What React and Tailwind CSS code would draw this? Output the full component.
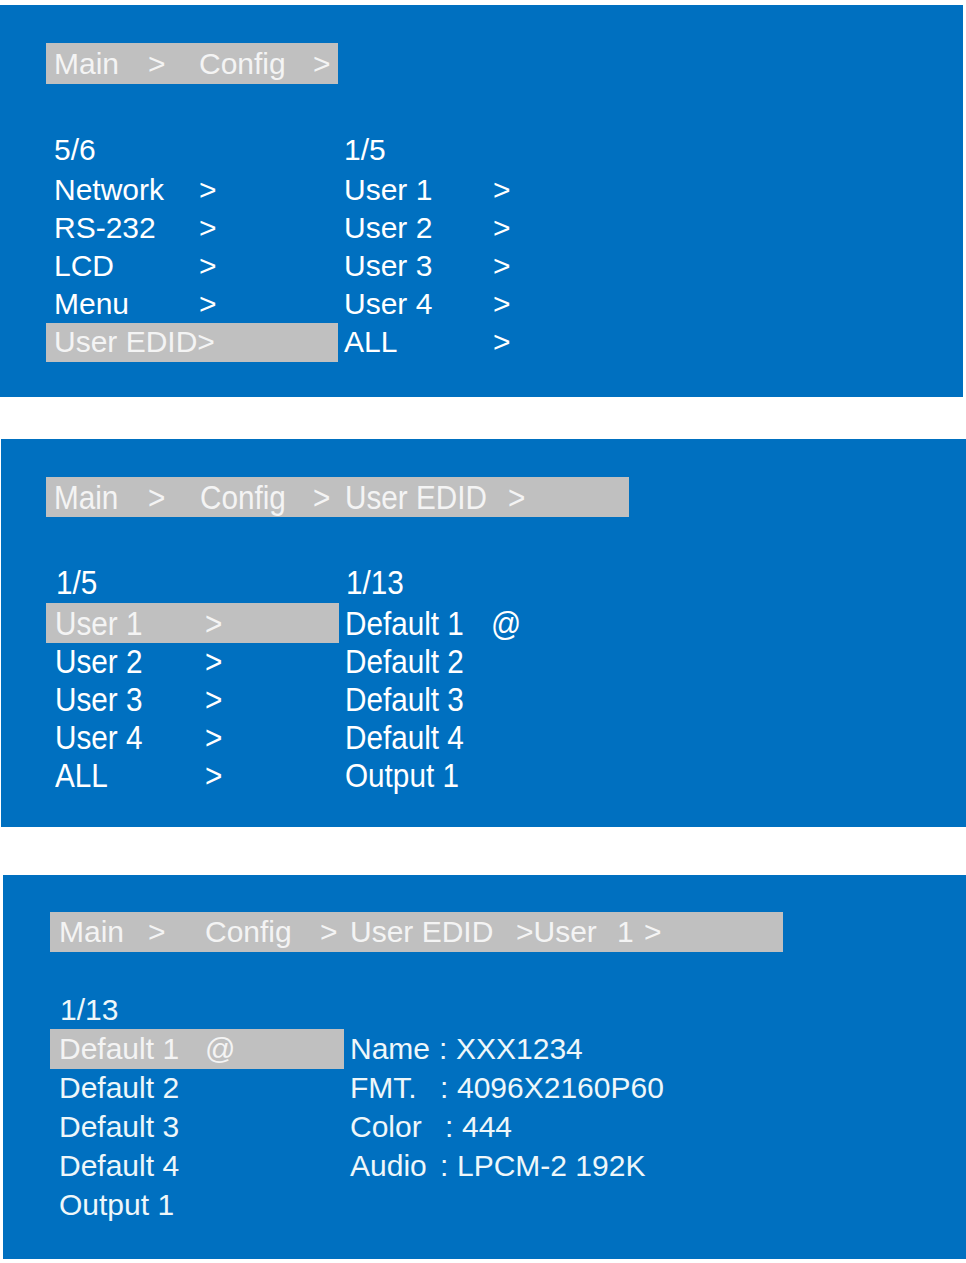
import React from "react";

const BLUE = "bg-[#0070C0]";
const GRAY = "bg-[#C0C0C0]";

function T({ narrow, children }) {
  // panel 2 text is drawn taller/narrower than plain Arial
  if (!narrow) return <span>{children}</span>;
  return <span className="inline-block origin-left scale-x-[0.9] whitespace-pre">{children}</span>;
}

function Crumbs({ items, narrow }) {
  return (
    <>
      {items.map(([label, w], i) => (
        <span key={i} className={`${w} shrink-0 whitespace-pre`}>
          <T narrow={narrow}>{label}</T>
        </span>
      ))}
    </>
  );
}

function PanelOne() {
  const left = ["Network", "RS-232", "LCD", "Menu", "User EDID"];
  const right = ["User 1", "User 2", "User 3", "User 4", "ALL"];
  return (
    <section className={`mt-[5px] w-[963px] h-[392px] ${BLUE} pt-[38px] text-[30px] leading-none text-white`}>
      <div className={`ml-[46px] w-[292px] h-[41px] ${GRAY} flex items-center pl-[8px] text-[#F4F4F4]`}>
        <Crumbs
          items={[
            ["Main", "w-[94px]"],
            [">", "w-[51px]"],
            ["Config", "w-[114px]"],
            [">", ""],
          ]}
        />
      </div>
      <div className="mt-[47px] mb-[2px] flex h-[38px] items-center">
        <div className="ml-[46px] w-[292px] pl-[8px]">5/6</div>
        <div className="pl-[6px]">1/5</div>
      </div>
      {left.map((l, i) => {
        const sel = i === 4;
        return (
          <div key={l} className="flex h-[38px] items-center">
            <div
              className={`ml-[46px] w-[292px] pl-[8px] flex items-center ${
                sel ? `${GRAY} h-[39px] text-[#F4F4F4]` : "h-[38px]"
              }`}
            >
              {sel ? (
                <span className="whitespace-pre">User EDID&gt;</span>
              ) : (
                <>
                  <span className="w-[145px] shrink-0">{l}</span>
                  <span>&gt;</span>
                </>
              )}
            </div>
            <div className="flex pl-[6px]">
              <span className="w-[149px] shrink-0">{right[i]}</span>
              <span>&gt;</span>
            </div>
          </div>
        );
      })}
    </section>
  );
}

function PanelTwo() {
  const left = ["User 1", "User 2", "User 3", "User 4", "ALL"];
  const right = ["Default 1", "Default 2", "Default 3", "Default 4", "Output 1"];
  return (
    <section className={`mt-[42px] ml-px w-[965px] h-[388px] ${BLUE} pt-[38px] text-[33px] leading-none text-white`}>
      <div className={`ml-[45px] w-[583px] h-[40px] ${GRAY} flex items-center pl-[8px] text-[#F4F4F4]`}>
        <Crumbs
          narrow
          items={[
            ["Main", "w-[94px]"],
            [">", "w-[52px]"],
            ["Config", "w-[113px]"],
            [">", "w-[32px]"],
            ["User EDID", "w-[163px]"],
            [">", ""],
          ]}
        />
      </div>
      <div className="mt-[46px] mb-[3px] flex h-[38px] items-center">
        <div className="ml-[45px] w-[293px] pl-[10px]">
          <T narrow>1/5</T>
        </div>
        <div className="pl-[7px]">
          <T narrow>1/13</T>
        </div>
      </div>
      {left.map((l, i) => {
        const sel = i === 0;
        return (
          <div key={l} className="flex h-[38px] items-center">
            <div
              className={`ml-[45px] w-[293px] pl-[9px] flex items-center ${
                sel ? `${GRAY} h-[40px] text-[#F4F4F4]` : "h-[38px]"
              }`}
            >
              <span className="w-[150px] shrink-0">
                <T narrow>{l}</T>
              </span>
              <T narrow>&gt;</T>
            </div>
            <div className="flex pl-[6px]">
              <span className="w-[146px] shrink-0">
                <T narrow>{right[i]}</T>
              </span>
              {i === 0 && <T narrow>@</T>}
            </div>
          </div>
        );
      })}
    </section>
  );
}

function PanelThree() {
  const left = ["Default 1", "Default 2", "Default 3", "Default 4", "Output 1"];
  const info = [
    ["Name", "w-[89px]", "XXX1234"],
    ["FMT.", "w-[90px]", "4096X2160P60"],
    ["Color", "w-[95px]", "444"],
    ["Audio", "w-[90px]", "LPCM-2 192K"],
  ];
  return (
    <section className={`mt-[48px] ml-[3px] w-[963px] h-[384px] ${BLUE} pt-[37px] text-[30px] leading-none text-[#EEF7FA]`}>
      <div className={`ml-[47px] w-[733px] h-[40px] ${GRAY} flex items-center pl-[9px] text-[#F4F4F4]`}>
        <Crumbs
          items={[
            ["Main", "w-[89px]"],
            [">", "w-[57px]"],
            ["Config", "w-[115px]"],
            [">", "w-[30px]"],
            ["User EDID", "w-[166px]"],
            [">User", "w-[101px]"],
            ["1", "w-[27px]"],
            [">", ""],
          ]}
        />
      </div>
      <div className="mt-[38px] flex h-[39px] items-center">
        <div className="ml-[47px] pl-[10px]">1/13</div>
      </div>
      {left.map((l, i) => {
        const sel = i === 0;
        const row = info[i];
        return (
          <div key={l} className="flex h-[39px] items-center">
            <div
              className={`ml-[47px] w-[294px] h-[39px] pl-[9px] flex items-center ${
                sel ? `${GRAY} h-[40px] text-[#F4F4F4]` : ""
              }`}
            >
              <span className="w-[146px] shrink-0">{l}</span>
              {sel && <span>@</span>}
            </div>
            {row && (
              <div className="flex pl-[6px] whitespace-pre">
                <span className={`${row[1]} shrink-0`}>{row[0]}</span>
                <span className="w-[17px] shrink-0">:</span>
                <span>{row[2]}</span>
              </div>
            )}
          </div>
        );
      })}
    </section>
  );
}

export default function App() {
  return (
    <div className="w-[966px] h-[1263px] bg-white overflow-hidden flow-root font-['Liberation_Sans',Arial,sans-serif]">
      <PanelOne />
      <PanelTwo />
      <PanelThree />
    </div>
  );
}
